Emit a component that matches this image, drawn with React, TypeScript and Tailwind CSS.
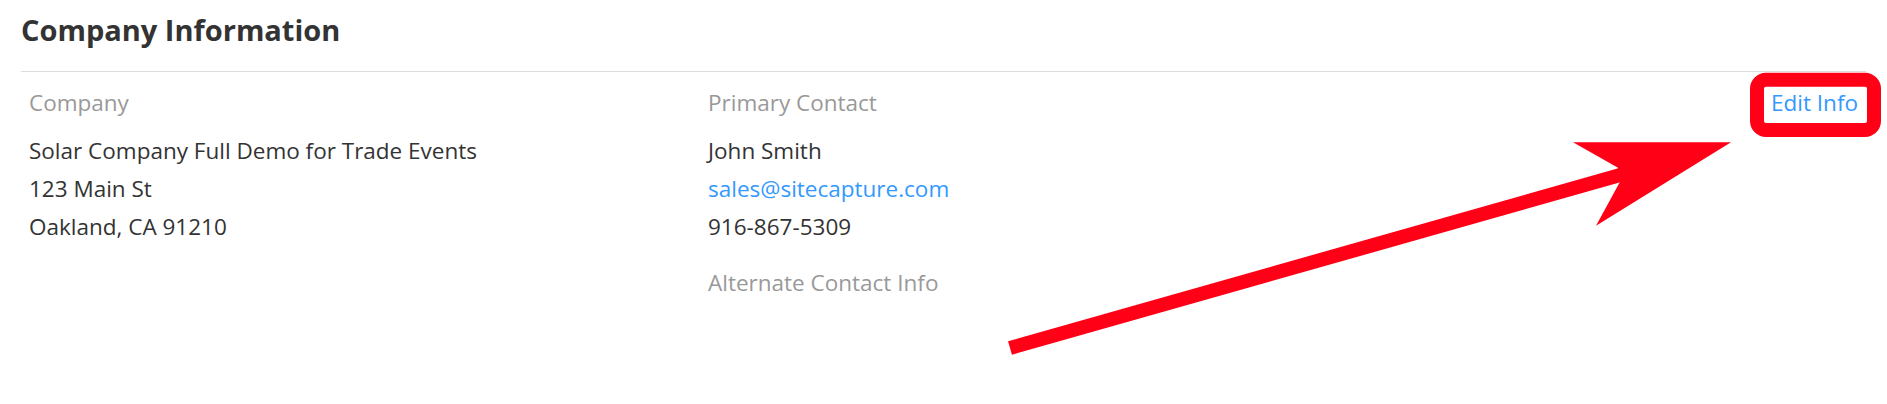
import React from 'react';

const Annotation: React.FC = () => (
  <svg
    className="pointer-events-none absolute left-0 top-0"
    width="1887"
    height="404"
    viewBox="0 0 1887 404"
  >
    {/* box round the Edit Info link */}
    <rect x="1757" y="79.7" width="117" height="50.3" rx="9" fill="none" stroke="#ff0016" strokeWidth="14" />
    {/* arrow */}
    <line x1="1010" y1="348" x2="1622" y2="174.5" stroke="#ff0016" strokeWidth="14" />
    <polygon points="1573,142.3 1731,142.3 1596,225.7 1620,181.7 1618,167.7" fill="#ff0016" />
  </svg>
);

const App: React.FC = () => {
  return (
    <div className="relative h-[404px] bg-white pt-[10px] font-['Open_Sans',sans-serif] text-[#333]">
      <h2 className="mx-[21px] text-[29px] font-bold leading-[40px] text-[#333]">Company Information</h2>

      <div className="mx-[21px] mt-[21px] border-t border-[#dddddd] px-2 pt-[12px]">
        <div className="grid grid-cols-[679px_1fr_auto] text-[22.5px] leading-[38px]">
          <div>
            <div className="mb-[10px] text-[#999]">Company</div>
            <div>Solar Company Full Demo for Trade Events</div>
            <div>123 Main St</div>
            <div>Oakland, CA 91210</div>
          </div>

          <div>
            <div className="mb-[10px] text-[#999]">Primary Contact</div>
            <div>John Smith</div>
            <div>
              <a href="#" className="text-[#3399ff]">
                sales@sitecapture.com
              </a>
            </div>
            <div>916-867-5309</div>
            <div className="mt-[18px] text-[#999]">Alternate Contact Info</div>
          </div>

          <div>
            <a href="#" className="text-[#3399ff]">
              Edit Info
            </a>
          </div>
        </div>
      </div>

      <Annotation />
    </div>
  );
};

export default App;
